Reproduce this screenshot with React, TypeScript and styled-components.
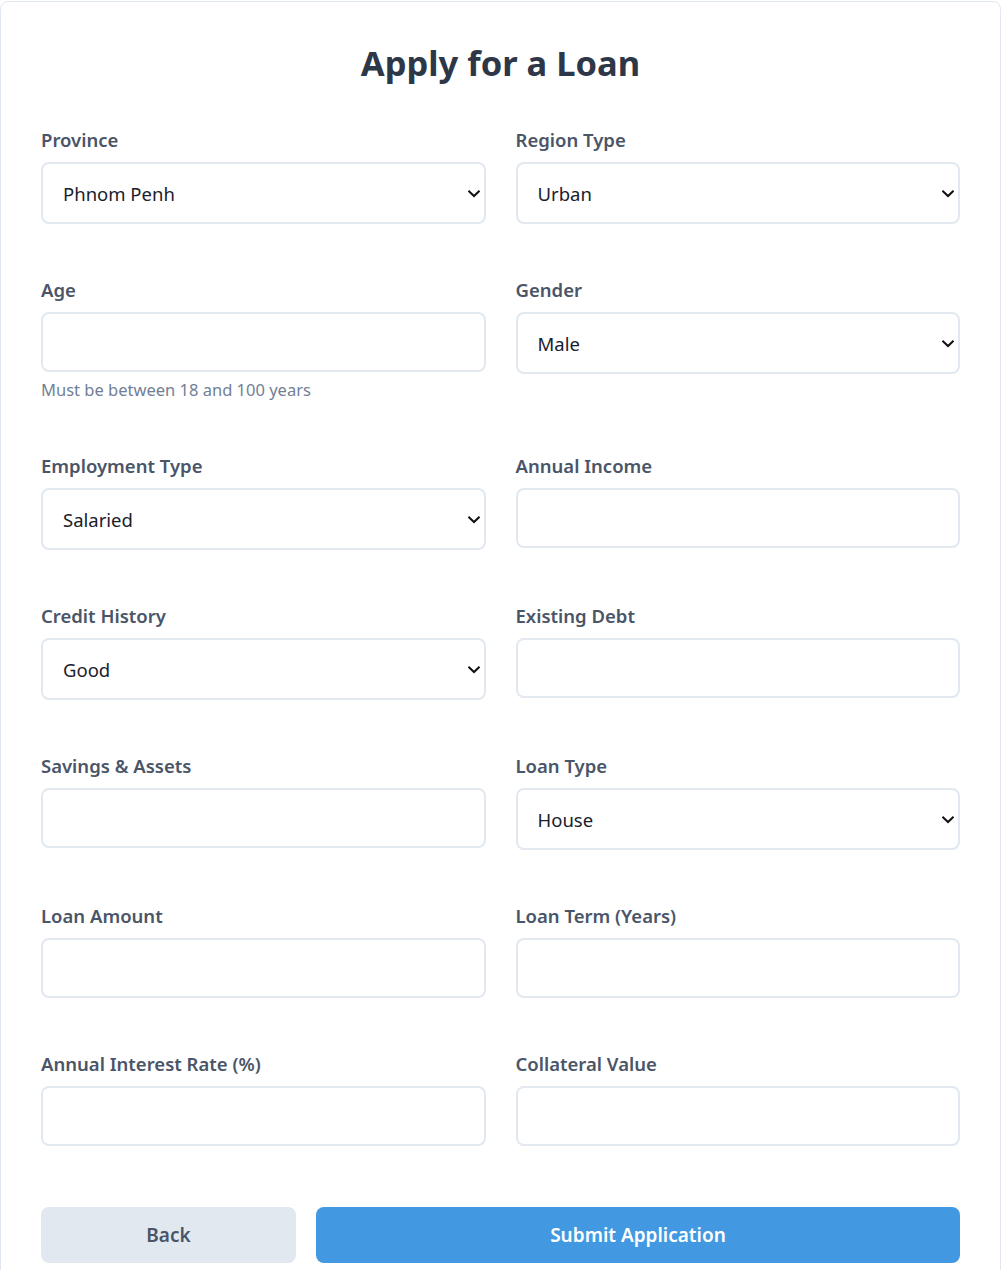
import React from "react";
import styled, { createGlobalStyle } from "styled-components";

const Global = createGlobalStyle`
  html, body { margin: 0; padding: 0; background: #ffffff; }
  body { font-family: "Noto Sans", "Open Sans", sans-serif; }
  * { box-sizing: border-box; }
`;

const Card = styled.div`
  margin: 1px 1px 0 0;
  background: #ffffff;
  border: 1px solid #e2e8f0;
  border-radius: 8px;
  padding: 40px;
`;

const Title = styled.h1`
  margin: 0 0 44px 0;
  text-align: center;
  font-size: 34.5px;
  line-height: 42px;
  font-weight: 700;
  color: #2d3748;
`;

const Grid = styled.div`
  display: grid;
  grid-template-columns: 1fr 1fr;
  column-gap: 30px;
  row-gap: 54px;
`;

const Group = styled.div`
  display: flex;
  flex-direction: column;
`;

const Label = styled.label`
  display: block;
  font-size: 18.5px;
  line-height: 24px;
  font-weight: 600;
  color: #4a5568;
  margin-bottom: 10px;
`;

const SelectWrap = styled.div`
  position: relative;
`;

const Select = styled.select`
  appearance: none;
  width: 100%;
  height: 62px;
  padding: 0 40px 0 20px;
  border: 2px solid #e2e8f0;
  border-radius: 8px;
  background: #ffffff;
  font-family: inherit;
  font-size: 18.5px;
  color: #1a202c;
  outline: none;
`;

const Chevron = styled.svg`
  position: absolute;
  right: 6px;
  top: 50%;
  width: 12px;
  height: 8px;
  margin-top: -3px;
  pointer-events: none;
`;

const Input = styled.input`
  width: 100%;
  height: 60px;
  padding: 0 20px;
  border: 2px solid #e2e8f0;
  border-radius: 8px;
  background: #ffffff;
  font-family: inherit;
  font-size: 18.5px;
  color: #1a202c;
  outline: none;
`;

const Hint = styled.div`
  margin-top: 8px;
  font-size: 16.5px;
  line-height: 20px;
  color: #718096;
`;

const Actions = styled.div`
  display: flex;
  gap: 20px;
  margin-top: 61px;
`;

const Button = styled.button<{ $primary?: boolean }>`
  flex: ${(p) => (p.$primary ? "1 1 auto" : "0 0 255px")};
  height: 56px;
  padding: 0;
  border: none;
  border-radius: 8px;
  font-family: inherit;
  font-size: 19px;
  font-weight: 600;
  cursor: pointer;
  background: ${(p) => (p.$primary ? "#4299e1" : "#e2e8f0")};
  color: ${(p) => (p.$primary ? "#ffffff" : "#4a5568")};
`;

type Field =
  | { kind: "select"; label: string; value: string; options: string[] }
  | { kind: "input"; label: string; hint?: string };

const fields: Field[] = [
  { kind: "select", label: "Province", value: "Phnom Penh", options: ["Phnom Penh", "Siem Reap", "Battambang", "Kampot"] },
  { kind: "select", label: "Region Type", value: "Urban", options: ["Urban", "Rural"] },
  { kind: "input", label: "Age", hint: "Must be between 18 and 100 years" },
  { kind: "select", label: "Gender", value: "Male", options: ["Male", "Female"] },
  { kind: "select", label: "Employment Type", value: "Salaried", options: ["Salaried", "Self-Employed", "Unemployed"] },
  { kind: "input", label: "Annual Income" },
  { kind: "select", label: "Credit History", value: "Good", options: ["Good", "Fair", "Poor"] },
  { kind: "input", label: "Existing Debt" },
  { kind: "input", label: "Savings & Assets" },
  { kind: "select", label: "Loan Type", value: "House", options: ["House", "Car", "Personal", "Business"] },
  { kind: "input", label: "Loan Amount" },
  { kind: "input", label: "Loan Term (Years)" },
  { kind: "input", label: "Annual Interest Rate (%)" },
  { kind: "input", label: "Collateral Value" },
];

const ChevronIcon = () => (
  <Chevron viewBox="0 0 12 8" fill="none">
    <path d="M1.2 1.4 L6 6 L10.8 1.4" stroke="#111111" strokeWidth="2" strokeLinecap="square" />
  </Chevron>
);

export default function App() {
  return (
    <>
      <Global />
      <Card>
        <Title>Apply for a Loan</Title>
        <Grid>
          {fields.map((f) => (
            <Group key={f.label}>
              <Label>{f.label}</Label>
              {f.kind === "select" ? (
                <SelectWrap>
                  <Select defaultValue={f.value}>
                    {f.options.map((o) => (
                      <option key={o}>{o}</option>
                    ))}
                  </Select>
                  <ChevronIcon />
                </SelectWrap>
              ) : (
                <>
                  <Input type="text" />
                  {f.hint && <Hint>{f.hint}</Hint>}
                </>
              )}
            </Group>
          ))}
        </Grid>
        <Actions>
          <Button>Back</Button>
          <Button $primary>Submit Application</Button>
        </Actions>
      </Card>
    </>
  );
}
